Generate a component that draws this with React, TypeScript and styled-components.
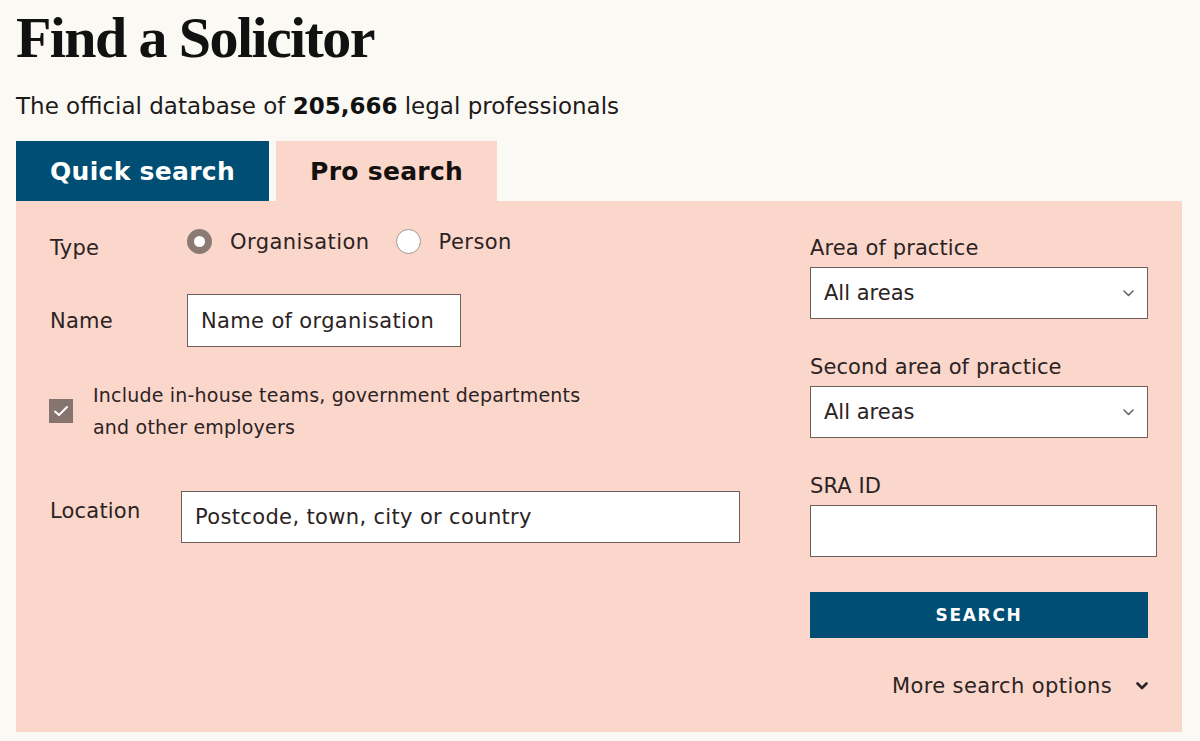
import { useState } from "react";
import styled, { createGlobalStyle } from "styled-components";

const sans = `"DejaVu Sans", "Noto Sans", sans-serif`;
const ink = "#2b2323";
const brown = "#8b7a73";
const blue = "#004e73";
const pink = "#fbd6cb";

const GlobalStyle = createGlobalStyle`
  body {
    margin: 0;
    background: #fbf9f4;
    font-family: ${sans};
    color: ${ink};
  }
  * { box-sizing: border-box; }
`;

const Page = styled.div`
  width: 1200px;
  padding: 0 18px 0 16px;
`;

const Heading = styled.h1`
  margin: 9px 0 0;
  font-family: "Liberation Serif", "Times New Roman", serif;
  font-weight: 700;
  font-size: 58px;
  line-height: 58px;
  letter-spacing: -1.6px;
  color: #111;
`;

const Subtitle = styled.p`
  margin: 24px 0 0;
  font-size: 23px;
  line-height: 30px;
  color: #1e1a1a;

  strong {
    font-weight: 700;
    color: #111;
  }
`;

const Tabs = styled.div`
  display: flex;
  gap: 7px;
  margin-top: 20px;
`;

const Tab = styled.button<{ $active: boolean }>`
  height: 60px;
  padding: 0 34px;
  border: none;
  font-family: ${sans};
  font-weight: 700;
  font-size: 25px;
  letter-spacing: 0.3px;
  cursor: pointer;
  background: ${(p) => (p.$active ? pink : blue)};
  color: ${(p) => (p.$active ? "#141010" : "#fff")};
`;

const Panel = styled.div`
  width: 1166px;
  height: 531px;
  background: ${pink};
  padding: 28px 25px 0 34px;
  display: flex;
  gap: 70px;
`;

const LeftCol = styled.div`
  width: 690px;
  display: flex;
  flex-direction: column;
`;

const Row = styled.div<{ $top?: number; $align?: string }>`
  display: flex;
  align-items: ${(p) => p.$align ?? "flex-start"};
  margin-top: ${(p) => p.$top ?? 0}px;
`;

const RowLabel = styled.label<{ $width: number; $pad?: number }>`
  width: ${(p) => p.$width}px;
  flex-shrink: 0;
  padding-top: ${(p) => p.$pad ?? 0}px;
  font-size: 21px;
  line-height: 24px;
  letter-spacing: 0.2px;
`;

const RadioGroup = styled.div`
  display: flex;
  align-items: center;
  gap: 26px;
`;

const RadioOption = styled.label`
  display: flex;
  align-items: center;
  gap: 18px;
  font-size: 21px;
  line-height: 24px;
  letter-spacing: 0.45px;
  cursor: pointer;
`;

const Radio = styled.input`
  appearance: none;
  margin: 0;
  width: 25px;
  height: 25px;
  border-radius: 50%;
  background: #fff;
  border: 1px solid #a39690;
  cursor: pointer;

  &:checked {
    border: 7.5px solid ${brown};
  }
`;

const TextInput = styled.input<{ $width: number; $height?: number }>`
  width: ${(p) => p.$width}px;
  height: ${(p) => p.$height ?? 52}px;
  margin: 0;
  padding: 0 13px;
  border: 1px solid #6d605b;
  border-radius: 0;
  background: #fff;
  font-family: ${sans};
  font-size: 21px;
  letter-spacing: 0.35px;
  color: ${ink};

  &::placeholder {
    color: ${ink};
    opacity: 1;
  }
`;

const CheckRow = styled.label`
  display: flex;
  align-items: center;
  gap: 20px;
  margin: 32px 0 0 -1px;
  cursor: pointer;
`;

const CheckBox = styled.span<{ $checked: boolean }>`
  width: 24px;
  height: 24px;
  flex-shrink: 0;
  display: flex;
  align-items: center;
  justify-content: center;
  background: ${(p) => (p.$checked ? "#85756e" : "#fff")};
  border: 1px solid #85756e;
`;

const CheckText = styled.span`
  max-width: 510px;
  font-size: 19px;
  line-height: 32px;
  letter-spacing: 0.2px;
`;

const RightCol = styled.div`
  width: 347px;
  padding-top: 7px;
  display: flex;
  flex-direction: column;
`;

const Field = styled.div<{ $top?: number }>`
  display: flex;
  flex-direction: column;
  margin-top: ${(p) => p.$top ?? 0}px;
`;

const FieldLabel = styled.label`
  font-size: 21px;
  line-height: 24px;
  letter-spacing: 0.1px;
  margin-bottom: 7px;
`;

const SelectWrap = styled.div`
  position: relative;
  width: 338px;
`;

const Select = styled.select`
  appearance: none;
  width: 100%;
  height: 52px;
  margin: 0;
  padding: 0 13px;
  border: 1px solid #6d605b;
  border-radius: 0;
  background: #fff;
  font-family: ${sans};
  font-size: 21px;
  color: ${ink};
`;

const SelectArrow = styled.svg`
  position: absolute;
  right: 14px;
  top: 23px;
  pointer-events: none;
`;

const SearchButton = styled.button`
  width: 338px;
  height: 46px;
  margin-top: 35px;
  border: none;
  background: ${blue};
  color: #fff;
  font-family: ${sans};
  font-weight: 700;
  font-size: 17px;
  letter-spacing: 1.7px;
  cursor: pointer;
`;

const MoreOptions = styled.button`
  width: 338px;
  margin-top: 36px;
  padding: 0;
  border: none;
  background: none;
  display: flex;
  align-items: center;
  justify-content: flex-end;
  gap: 24px;
  font-family: ${sans};
  font-size: 21px;
  line-height: 24px;
  letter-spacing: 0.4px;
  color: ${ink};
  cursor: pointer;
`;

function Chevron() {
  return (
    <svg width="12" height="8" viewBox="0 0 12 8">
      <polyline points="1.5,1.5 6,6 10.5,1.5" fill="none" stroke={ink} strokeWidth="2.6" strokeLinecap="round" strokeLinejoin="round" />
    </svg>
  );
}

function AreaSelect({ id }: { id: string }) {
  return (
    <SelectWrap>
      <Select id={id} defaultValue="all">
        <option value="all">All areas</option>
      </Select>
      <SelectArrow width="11" height="7" viewBox="0 0 11 7">
        <polyline points="1,1 5.5,5.5 10,1" fill="none" stroke="#6b6461" strokeWidth="1.6" strokeLinecap="round" strokeLinejoin="round" />
      </SelectArrow>
    </SelectWrap>
  );
}

export default function App() {
  const [tab, setTab] = useState<"quick" | "pro">("pro");
  const [type, setType] = useState<"org" | "person">("org");
  const [include, setInclude] = useState(true);

  return (
    <Page>
      <GlobalStyle />
      <Heading>Find a Solicitor</Heading>
      <Subtitle>
        The official database of <strong>205,666</strong> legal professionals
      </Subtitle>

      <Tabs>
        <Tab $active={tab === "quick"} onClick={() => setTab("quick")}>Quick search</Tab>
        <Tab $active={tab === "pro"} onClick={() => setTab("pro")}>Pro search</Tab>
      </Tabs>

      <Panel>
        <LeftCol>
          <Row>
            <RowLabel $width={137} $pad={7}>Type</RowLabel>
            <RadioGroup>
              <RadioOption>
                <Radio type="radio" name="type" checked={type === "org"} onChange={() => setType("org")} />
                Organisation
              </RadioOption>
              <RadioOption>
                <Radio type="radio" name="type" checked={type === "person"} onChange={() => setType("person")} />
                Person
              </RadioOption>
            </RadioGroup>
          </Row>

          <Row $top={34} $align="center">
            <RowLabel $width={137} htmlFor="name">Name</RowLabel>
            <TextInput id="name" $width={274} $height={53} placeholder="Name of organisation" />
          </Row>

          <CheckRow onClick={() => setInclude(!include)}>
            <CheckBox $checked={include}>
              {include && (
                <svg width="16" height="12" viewBox="0 0 16 12">
                  <polyline points="2,6.5 6,10 14,2" fill="none" stroke="#fff" strokeWidth="2" strokeLinecap="round" strokeLinejoin="round" />
                </svg>
              )}
            </CheckBox>
            <CheckText>Include in-house teams, government departments and other employers</CheckText>
          </CheckRow>

          <Row $top={48}>
            <RowLabel $width={131} $pad={8} htmlFor="location">Location</RowLabel>
            <TextInput id="location" $width={559} placeholder="Postcode, town, city or country" />
          </Row>
        </LeftCol>

        <RightCol>
          <Field>
            <FieldLabel htmlFor="area1">Area of practice</FieldLabel>
            <AreaSelect id="area1" />
          </Field>
          <Field $top={36}>
            <FieldLabel htmlFor="area2">Second area of practice</FieldLabel>
            <AreaSelect id="area2" />
          </Field>
          <Field $top={36}>
            <FieldLabel htmlFor="sra">SRA ID</FieldLabel>
            <TextInput id="sra" $width={347} />
          </Field>
          <SearchButton>SEARCH</SearchButton>
          <MoreOptions>
            More search options
            <Chevron />
          </MoreOptions>
        </RightCol>
      </Panel>
    </Page>
  );
}
